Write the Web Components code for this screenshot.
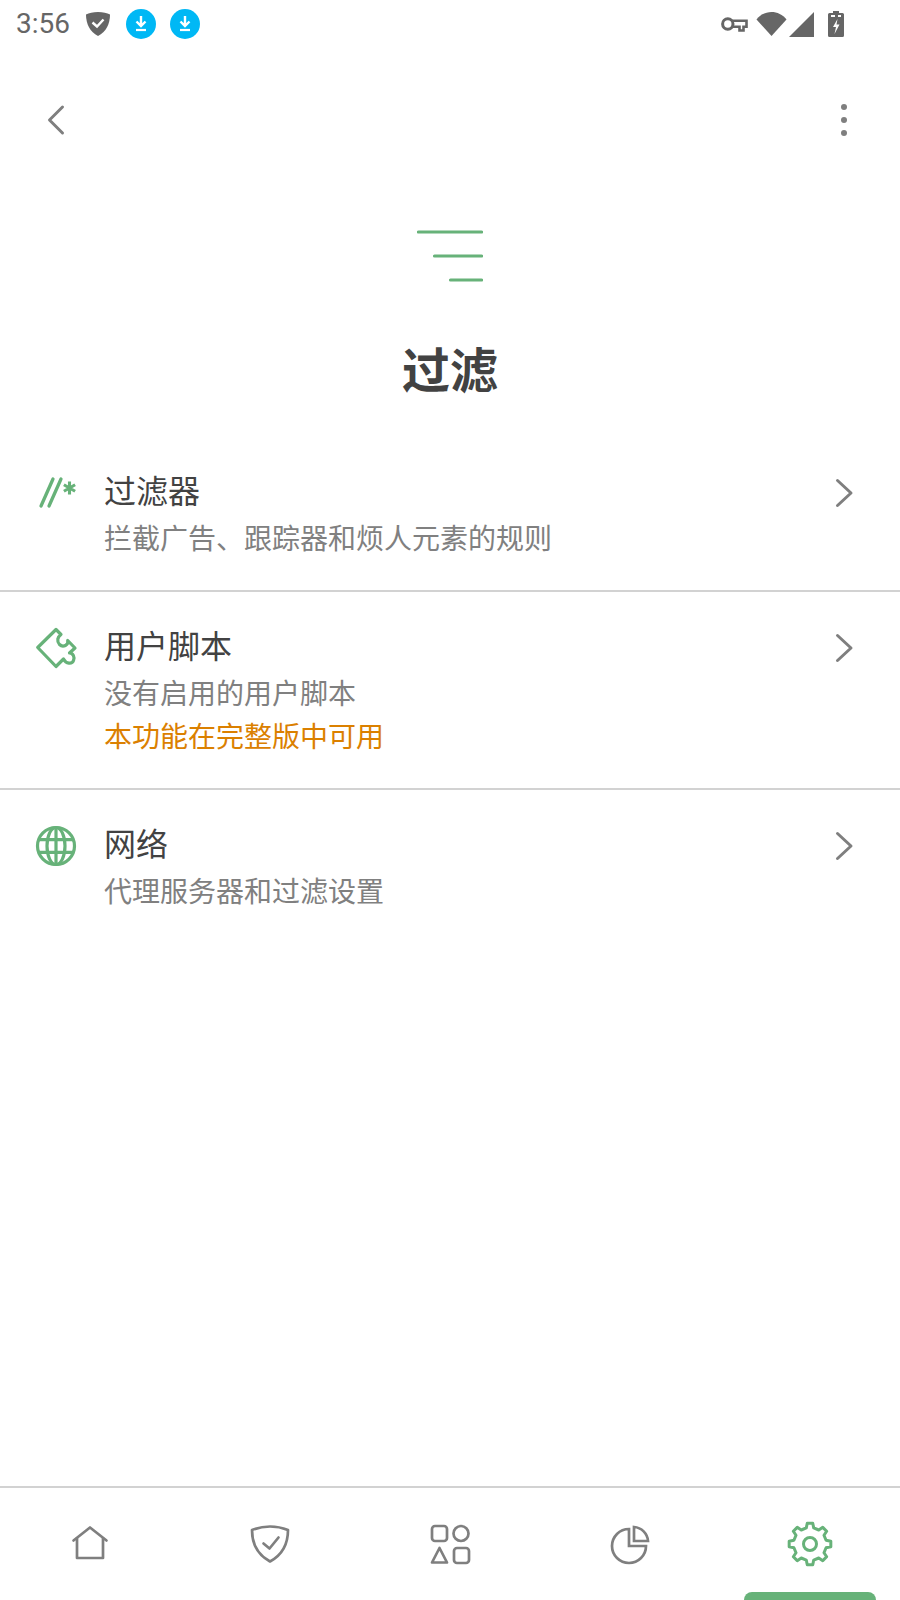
<!DOCTYPE html>
<html>
<head>
<meta charset="utf-8">
<style>
    html, body { margin: 0; padding: 0; background: #fff; }
    body {
        width: 900px;
        height: 1600px;
        display: flex;
        flex-direction: column;
        overflow: hidden;
        font-family: "Noto Sans CJK SC", sans-serif;
    }
</style>
</head>
<body>
<status-bar></status-bar>
<top-bar></top-bar>
<page-header>过滤</page-header>
<setting-row divided>
    <svg slot="icon" width="48" height="48" viewBox="0 0 48 48" fill="none" stroke="#67b279" stroke-width="3.300" stroke-linecap="round">
        <path d="M9 37L21 10M17 37L29 10"/>
        <path d="M37.500 12.500v13M31.900 15.750l11.200 6.500M43.100 15.750l-11.200 6.500" stroke-width="3.100" stroke-linecap="butt"/>
    </svg>
    <span slot="title">过滤器</span>
    <span slot="sub">拦截广告、跟踪器和烦人元素的规则</span>
</setting-row>
<setting-row divided>
    <svg slot="icon" width="48" height="48" viewBox="0 0 48 48" fill="none" stroke="#67b279" stroke-width="3.200" stroke-linejoin="round">
        <path d="M24 5.500L5.700 23.500L24 42.500L31.500 35C34 40 40 40.500 41.500 36.500C43 33 41 29 37.500 29L43 24L35.700 16.500C37 21 31 24 27.500 20.500C24.500 17 25.500 13 29 10.500Z"/>
    </svg>
    <span slot="title">用户脚本</span>
    <span slot="sub">没有启用的用户脚本</span>
    <span slot="note">本功能在完整版中可用</span>
</setting-row>
<setting-row>
    <svg slot="icon" width="48" height="48" viewBox="0 0 48 48" fill="none" stroke="#67b279" stroke-width="3.200">
        <circle cx="24" cy="24" r="18.500"/>
        <ellipse cx="24" cy="24" rx="9" ry="18.500"/>
        <path d="M24 5.500v37M7 17.700h34M7 30.300h34"/>
    </svg>
    <span slot="title">网络</span>
    <span slot="sub">代理服务器和过滤设置</span>
</setting-row>
<div style="flex:1"></div>
<bottom-nav>
    <nav-item>
        <svg width="48" height="48" viewBox="0 0 48 48" fill="none" stroke="#7f7f7f" stroke-width="2.700" stroke-linecap="round" stroke-linejoin="round">
            <path d="M7.500 20.500L24 7.500L40.500 20.500"/>
            <path d="M11 18.500V38H37V18.500"/>
        </svg>
    </nav-item>
    <nav-item>
        <svg width="48" height="48" viewBox="0 0 48 48" fill="none" stroke="#7f7f7f" stroke-width="2.700" stroke-linecap="round" stroke-linejoin="round">
            <path d="M24 6.500C31 6.500 37 8 42 10C42 24 36 35 24 41.500C12 35 6 24 6 10C11 8 17 6.500 24 6.500Z"/>
            <path d="M17.500 23.500L23.500 28.500L32.500 17.500"/>
        </svg>
    </nav-item>
    <nav-item>
        <svg width="48" height="48" viewBox="0 0 48 48" fill="none" stroke="#7f7f7f" stroke-width="2.700" stroke-linejoin="round">
            <rect x="6" y="6" width="15" height="15" rx="3"/>
            <circle cx="35" cy="13.500" r="7.500"/>
            <path d="M13.500 28L21 42.500H6Z"/>
            <rect x="28" y="28" width="15" height="15" rx="3"/>
        </svg>
    </nav-item>
    <nav-item>
        <svg width="48" height="48" viewBox="0 0 48 48" fill="none" stroke="#7f7f7f" stroke-width="2.700">
            <path d="M23 9A17 17 0 1 0 40 26H23Z"/>
            <path d="M28 7A15 15 0 0 1 42 21H28Z"/>
        </svg>
    </nav-item>
    <nav-item active>
        <svg id="gear" width="48" height="48" viewBox="0 0 48 48" fill="none" stroke="#67b279" stroke-width="3" stroke-linejoin="round">
            <circle cx="24" cy="24" r="6.500"/>
        </svg>
    </nav-item>
</bottom-nav>

<script>
class StatusBar extends HTMLElement {
    constructor() {
        super();
        this.attachShadow({ mode: 'open' });
        const download = `<svg width="30" height="30" viewBox="0 0 30 30">
            <circle cx="15" cy="15" r="15" fill="#00b8f5"/>
            <path d="M15 7v9M10.500 12.500L15 17l4.500-4.500" fill="none" stroke="#fff" stroke-width="2.400"/>
            <path d="M10 21h10" stroke="#fff" stroke-width="2.200"/>
        </svg>`;
        this.shadowRoot.innerHTML = `<style>
            :host {
                display: flex;
                align-items: center;
                height: 48px;
                padding: 0 56px 0 16px;
                color: #666;
                font: 28px/48px Roboto, sans-serif;
            }
            .left, .right { display: flex; align-items: center; }
            .left { flex: 1; }
            .time { width: 69px; }
            .dl { margin-left: 14px; display: flex; }
            .shield { display: flex; margin-right: 1px; }
            svg { display: block; }
        </style>
        <div class="left">
            <span class="time">3:56</span>
            <span class="shield"><svg width="26" height="26" viewBox="0 0 26 26">
                <path d="M13 1C18 1 22 2 25 3.500C25 13 21 21 13 25C5 21 1 13 1 3.500C4 2 8 1 13 1Z" fill="#666"/>
                <path d="M7.500 11.500L12 15.500L18.500 8.500" fill="none" stroke="#fff" stroke-width="2.400"/>
            </svg></span>
            <span class="dl">${download}</span>
            <span class="dl">${download}</span>
        </div>
        <div class="right">
            <svg width="27" height="16" viewBox="0 0 27 16" style="margin-right:8px">
                <circle cx="6.800" cy="8" r="5.200" fill="none" stroke="#666" stroke-width="3"/>
                <path d="M11.500 4.800H25.500V10.800H22.500V14.500H18.500V10.800H11.500" fill="none" stroke="#666" stroke-width="2.600"/>
            </svg>
            <svg width="31" height="26" viewBox="0 0 31 26" style="margin-right:2px">
                <path d="M0.500 8.500C8 -1.500 23 -1.500 30.500 8.500L15.500 25Z" fill="#666"/>
            </svg>
            <svg width="25" height="25" viewBox="0 0 25 25" style="margin-right:14px">
                <path d="M25 0V25H0Z" fill="#666"/>
            </svg>
            <svg width="16" height="26" viewBox="0 0 16 26">
                <path d="M5 0h6v2h3.500a1.500 1.500 0 0 1 1.500 1.500V24.500a1.500 1.500 0 0 1-1.500 1.500H1.500A1.500 1.500 0 0 1 0 24.500V3.500A1.500 1.500 0 0 1 1.500 2H5Z" fill="#666"/>
                <path d="M3 5h4M10 5h3" stroke="#fff" stroke-width="1.800"/>
                <path d="M9.500 8L5 16h3l-1.500 7L11.500 13.500H8.500Z" fill="#fff"/>
            </svg>
        </div>`;
    }
}
customElements.define('status-bar', StatusBar);

class TopBar extends HTMLElement {
    constructor() {
        super();
        this.attachShadow({ mode: 'open' });
        this.shadowRoot.innerHTML = `<style>
            :host {
                display: flex;
                justify-content: space-between;
                align-items: center;
                height: 144px;
                padding: 0 32px;
            }
            svg { display: block; }
        </style>
        <svg width="48" height="48" viewBox="0 0 48 48" fill="none" stroke="#7f7f7f" stroke-width="3" stroke-linecap="round" stroke-linejoin="round">
            <path d="M30.500 11L17.500 24L30.500 37"/>
        </svg>
        <svg width="48" height="48" viewBox="0 0 48 48" fill="#7f7f7f">
            <circle cx="24" cy="11" r="3"/>
            <circle cx="24" cy="24" r="3"/>
            <circle cx="24" cy="37" r="3"/>
        </svg>`;
    }
}
customElements.define('top-bar', TopBar);

class PageHeader extends HTMLElement {
    constructor() {
        super();
        this.attachShadow({ mode: 'open' });
        this.shadowRoot.innerHTML = `<style>
            :host {
                display: flex;
                flex-direction: column;
                align-items: center;
                padding: 36px 0 40px;
            }
            svg { display: block; }
            h1 {
                margin: 55px 0 0;
                font-size: 48px;
                line-height: 60px;
                font-weight: 700;
                color: #424242;
            }
        </style>
        <svg width="66" height="54" viewBox="0 0 66 54" fill="none" stroke="#67b279" stroke-width="3.200" stroke-linecap="round">
            <path d="M1.500 4H64.500M17.500 28H64.500M33.500 52H64.500"/>
        </svg>
        <h1><slot></slot></h1>`;
    }
}
customElements.define('page-header', PageHeader);

class SettingRow extends HTMLElement {
    constructor() {
        super();
        this.attachShadow({ mode: 'open' });
        this.shadowRoot.innerHTML = `<style>
            :host {
                display: flex;
                gap: 24px;
                padding: 32px 32px 31px;
            }
            :host([divided]) { border-bottom: 2px solid #d2d2d2; }
            .icon { width: 48px; height: 48px; flex: none; }
            .text { flex: 1; display: flex; flex-direction: column; margin-top: -2px; }
            .title {
                font-size: 32px;
                line-height: 44px;
                color: #424242;
            }
            .sub {
                font-size: 28px;
                line-height: 43px;
                margin-top: 5px;
                color: #808080;
            }
            .note {
                font-size: 28px;
                line-height: 43px;
                color: #db8000;
            }
            .note:not(:has(slot)) { display: none; }
            svg { display: block; }
        </style>
        <div class="icon"><slot name="icon"></slot></div>
        <div class="text">
            <div class="title"><slot name="title"></slot></div>
            <div class="sub"><slot name="sub"></slot></div>
            <div class="note"><slot name="note"></slot></div>
        </div>
        <svg width="48" height="48" viewBox="0 0 48 48" fill="none" stroke="#7f7f7f" stroke-width="3" stroke-linecap="round" stroke-linejoin="round">
            <path d="M17.500 11.500L31 24L17.500 36.500"/>
        </svg>`;
    }
}
customElements.define('setting-row', SettingRow);

class BottomNav extends HTMLElement {
    constructor() {
        super();
        this.attachShadow({ mode: 'open' });
        this.shadowRoot.innerHTML = `<style>
            :host {
                display: grid;
                grid-template-columns: repeat(5, 1fr);
                height: 112px;
                border-top: 2px solid #d2d2d2;
            }
        </style>
        <slot></slot>`;
    }
}
customElements.define('bottom-nav', BottomNav);

class NavItem extends HTMLElement {
    constructor() {
        super();
        this.attachShadow({ mode: 'open' });
        this.shadowRoot.innerHTML = `<style>
            :host {
                display: flex;
                justify-content: center;
                align-items: flex-start;
                padding-top: 32px;
                position: relative;
            }
            .bar {
                display: none;
                position: absolute;
                left: 24px;
                right: 24px;
                bottom: 0;
                height: 8px;
                background: #67b279;
                border-radius: 8px 8px 0 0;
            }
            :host([active]) .bar { display: block; }
        </style>
        <slot></slot>
        <div class="bar"></div>`;
    }
}
customElements.define('nav-item', NavItem);

// gear outline, 8 teeth
const gearPts = [];
for (let i = 0; i < 8; i++) {
    const a = (i * 45 - 90) * Math.PI / 180;
    [[-13, 16.5], [-7.5, 21], [7.5, 21], [13, 16.5]].forEach(([d, r]) => {
        const t = a + d * Math.PI / 180;
        gearPts.push((24 + r * Math.cos(t)).toFixed(2) + ' ' + (24 + r * Math.sin(t)).toFixed(2));
    });
}
const gearPath = document.createElementNS('http://www.w3.org/2000/svg', 'path');
gearPath.setAttribute('d', 'M' + gearPts.join('L') + 'Z');
document.getElementById('gear').appendChild(gearPath);
</script>
</body>
</html>
